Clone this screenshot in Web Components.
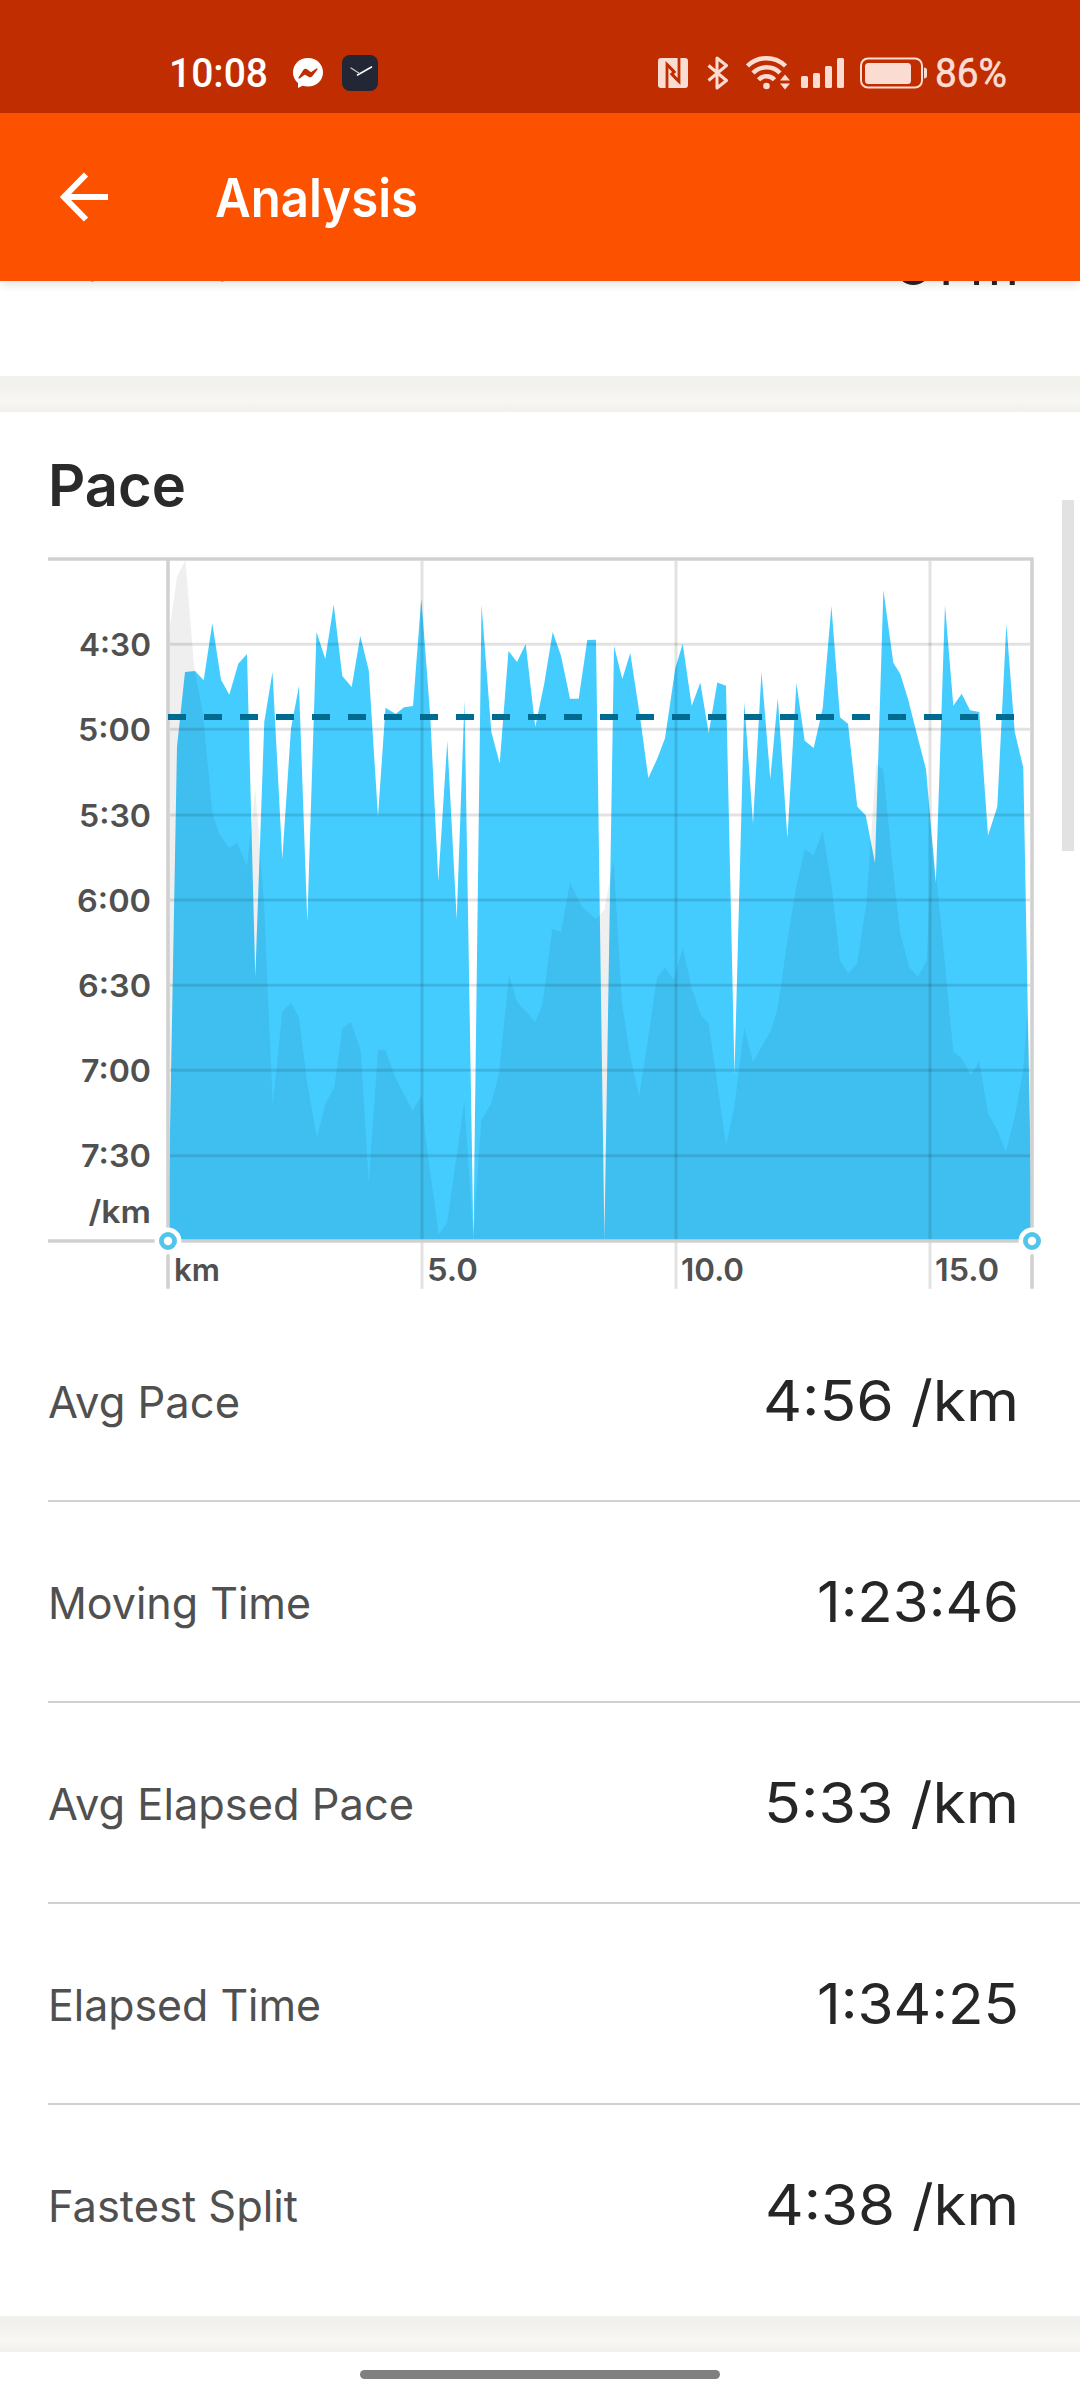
<!DOCTYPE html>
<html lang="en">
<head>
<meta charset="utf-8">
<title>Analysis</title>
<style>
  html, body { margin: 0; height: 100%; }
  body {
    background: #fff;
    font-family: Inter, 'Liberation Sans', sans-serif;
    color: #2a2a2a;
    overflow: hidden;
  }
</style>
</head>
<body>
<analysis-screen>
  <status-bar slot="top" time="10:08" battery="86%"></status-bar>
  <app-bar slot="top">Analysis</app-bar>

  <stat-section class="scrolled">
    <stat-row label="Max Elevation" value="81 m" label-width="255" value-width="123"></stat-row>
  </stat-section>
  <section-gap></section-gap>
  <stat-section heading="Pace">
    <pace-chart></pace-chart>
    <stat-row label="Avg Pace" value="4:56 /km" label-width="192" value-width="256"></stat-row>
    <stat-row label="Moving Time" value="1:23:46" label-width="263" value-width="202"></stat-row>
    <stat-row label="Avg Elapsed Pace" value="5:33 /km" label-width="366" value-width="255"></stat-row>
    <stat-row label="Elapsed Time" value="1:34:25" label-width="273" value-width="202"></stat-row>
    <stat-row label="Fastest Split" value="4:38 /km" label-width="250" value-width="254"></stat-row>
  </stat-section>
  <section-gap></section-gap>
  <nav-pill></nav-pill>
</analysis-screen>

<script>
const html = (markup) => {
  const template = document.createElement('template');
  template.innerHTML = markup;
  return template;
};

class BaseElement extends HTMLElement {
  constructor() {
    super();
    this.attachShadow({ mode: 'open' });
    this.shadowRoot.appendChild(this.constructor.template.content.cloneNode(true));
  }
}

/** Text stretched (or condensed) to a given advance width. */
class FitText extends BaseElement {
  static template = html(`
    <style>
      :host { display: block; white-space: nowrap; }
      span { display: inline-block; transform-origin: 0 50%; }
    </style>
    <span><slot></slot></span>
  `);

  fit() {
    const span = this.shadowRoot.querySelector('span');
    const width = Number(this.getAttribute('width'));
    if (!width || !this.textContent) return;
    span.style.transform = 'none';
    this.style.width = `${width}px`;
    span.style.transform = `scaleX(${width / span.getBoundingClientRect().width})`;
  }

  connectedCallback() {
    this.fit();
  }
}

class AnalysisScreen extends BaseElement {
  static template = html(`
    <style>
      :host {
        display: flex;
        flex-direction: column;
        width: 1080px;
        height: 2400px;
        position: relative;
        overflow: hidden;
        background: #fff;
      }
      header { position: relative; z-index: 1; flex: none; box-shadow: 0 3px 10px rgba(0,0,0,0.12); }
      main { flex: 1; min-height: 0; overflow: hidden; }
      .scrollbar {
        position: absolute;
        top: 500px;
        right: 6px;
        width: 12px;
        height: 351px;
        background: #e2e2e2;
      }
    </style>
    <header><slot name="top"></slot></header>
    <main><slot></slot></main>
    <div class="scrollbar"></div>
  `);
}

class StatusBar extends BaseElement {
  static template = html(`
    <style>
      :host {
        display: flex;
        align-items: center;
        box-sizing: border-box;
        height: 113px;
        padding: 33px 73px 0 169px;
        background: #c02d00;
        color: #fff;
        font-family: Roboto, sans-serif;
        font-weight: 500;
        font-size: 40px;
        line-height: 1;
      }
      svg { display: block; flex: none; }
      .time { margin-top: 2px; }
      .messenger { margin-left: 25px; }
      .clock { margin-left: 19px; }
      .system { display: flex; align-items: center; margin-left: auto; color: #fadcd3; }
      .bluetooth { margin-left: 19px; }
      .wifi { margin-left: 17px; }
      .signal { margin-left: 10px; }
      .power { margin-left: 16px; }
      .battery { margin: 2px 0 0 8px; font-weight: 400; -webkit-text-stroke: 0.6px; }
    </style>
    <fit-text class="time" width="99"></fit-text>
    <svg class="messenger" width="30" height="32" viewBox="0 0 30 32">
      <path fill="#fff" d="M15 1C6.600 1 0 7 0 15.500c0 4.500 2 8 5 10.500V31l4.500-2.200c1.700.5 3.500.8 5.500.8 8.400 0 15-6 15-14.300S23.400 1 15 1z"/>
      <path fill="#c02d00" d="M5.500 20.500 10.300 13c.9-1.300 2.600-1.600 3.800-.7l3.300 2.500c.4.300.8.300 1.200 0l4.800-3.200c.7-.5 1.500.3 1.100 1l-5.200 6.600c-.9 1.200-2.500 1.500-3.700.6L12.500 18c-.4-.3-.8-.3-1.200 0l-4.700 3.400c-.7.500-1.500-.2-1.100-.9z"/>
    </svg>
    <svg class="clock" width="36" height="36" viewBox="0 0 36 36">
      <rect width="36" height="36" rx="8" fill="#222635"/>
      <path fill="none" stroke="#fff" stroke-linecap="round" stroke-width="1.600" d="M15.500 20 29.500 12"/>
      <path fill="none" stroke="#c8c8cd" stroke-linecap="round" stroke-width="1.300" d="m9 13 8.500 5.500"/>
    </svg>
    <div class="system">
      <svg width="30" height="32" viewBox="0 0 30 32">
        <rect y="1" width="30" height="30" rx="3" fill="currentColor"/>
        <path fill="none" stroke="#c02d00" stroke-width="2.800" d="M9 31V7.500l6 6.200v5M21 1v23.500L15 18.200V13"/>
        <path fill="none" stroke="#c02d00" stroke-width="2.200" d="m9 7 8.500 8.800M21 25l-8.500-8.800"/>
      </svg>
      <svg class="bluetooth" width="22" height="34" viewBox="0 0 22 34">
        <path fill="none" stroke="currentColor" stroke-width="3" stroke-linejoin="round" d="m1.500 9.500 18 15L10 32V2l9.500 7.500-18 15"/>
      </svg>
      <svg class="wifi" width="45" height="36" viewBox="0 0 45 36">
        <g fill="none" stroke="currentColor" stroke-width="4.500">
          <path d="M1.500 11a27 27 0 0 1 38 0"/>
          <path d="M7 18a19 19 0 0 1 27 0"/>
          <path d="M12.500 24.800a11 11 0 0 1 16 0"/>
        </g>
        <circle cx="20.500" cy="31" r="3.300" fill="currentColor"/>
        <path fill="currentColor" d="m34 25.500 5-6 5 6zM34 28.500l5 6 5-6z"/>
      </svg>
      <svg class="signal" width="43" height="32" viewBox="0 0 43 32">
        <g fill="currentColor">
          <rect y="19" width="7" height="12" rx="1.500"/>
          <rect x="12" y="16" width="7" height="15" rx="1.500"/>
          <rect x="24" y="9" width="7" height="22" rx="1.500"/>
          <rect x="36" y="1" width="7" height="30" rx="1.500"/>
        </g>
      </svg>
      <svg class="power" width="67" height="32" viewBox="0 0 67 32">
        <rect x="1" y="1.500" width="61" height="29" rx="7" fill="none" stroke="currentColor" stroke-width="2"/>
        <rect x="5" y="6" width="46" height="21" rx="3.500" fill="currentColor"/>
        <path fill="currentColor" d="M64 10.500c2 0 3 1 3 2.500v6c0 1.500-1 2.500-3 2.500z"/>
      </svg>
      <fit-text class="battery" width="72"></fit-text>
    </div>
  `);

  connectedCallback() {
    for (const name of ['time', 'battery']) {
      const el = this.shadowRoot.querySelector(`.${name}`);
      el.textContent = this.getAttribute(name);
      el.fit?.();
    }
  }
}

class AppBar extends BaseElement {
  static template = html(`
    <style>
      :host {
        display: flex;
        align-items: center;
        height: 168px;
        padding-left: 60px;
        background: #fc5200;
        color: #fff;
      }
      h1 { margin: 2px 0 0 107px; font-size: 53px; font-weight: 600; line-height: 1; }
    </style>
    <svg width="48" height="50" viewBox="0 0 48 50">
      <path fill="none" stroke="#fff" stroke-width="6" d="M48 25H5M26 2.500 4 25l22 22.500"/>
    </svg>
    <h1><fit-text width="203"></fit-text></h1>
  `);

  connectedCallback() {
    const title = this.shadowRoot.querySelector('fit-text');
    title.textContent = this.textContent.trim();
    title.fit?.();
  }
}

class StatSection extends BaseElement {
  static template = html(`
    <style>
      :host { display: block; padding-bottom: 10px; background: #fff; }
      :host(.scrolled) { margin-top: -116px; padding-bottom: 11px; }
      h2 {
        display: flex;
        align-items: center;
        height: 128px;
        margin: 0;
        padding: 17px 0 0 48px;
        box-sizing: border-box;
        font-size: 58px;
        font-weight: 600;
        line-height: 1;
      }
      h2[hidden] { display: none; }
    </style>
    <h2 hidden><fit-text width="138"></fit-text></h2>
    <slot></slot>
  `);

  connectedCallback() {
    const heading = this.getAttribute('heading');
    if (!heading) return;
    this.shadowRoot.querySelector('h2').hidden = false;
    const text = this.shadowRoot.querySelector('fit-text');
    text.textContent = heading;
    text.fit?.();
  }
}

class StatRow extends BaseElement {
  static template = html(`
    <style>
      :host {
        display: flex;
        align-items: center;
        justify-content: space-between;
        box-sizing: border-box;
        height: 201px;
        margin-left: 48px;
        padding: 3px 61px 0 0;
        border-bottom: 2px solid #d0d0d0;
        line-height: 1.2;
      }
      :host(:last-of-type) { border-bottom-color: transparent; }
      :host(:only-of-type) { height: 200px; }
      .label { font-size: 43.5px; font-weight: 400; color: #505050; }
      .value { font-size: 56px; font-weight: 400; color: #262626; }
    </style>
    <fit-text class="label"></fit-text>
    <fit-text class="value"></fit-text>
  `);

  connectedCallback() {
    for (const name of ['label', 'value']) {
      const el = this.shadowRoot.querySelector(`.${name}`);
      el.setAttribute('width', this.getAttribute(`${name}-width`));
      el.textContent = this.getAttribute(name);
      el.fit?.();
    }
  }
}

class SectionGap extends BaseElement {
  static template = html(`
    <style>
      :host {
        display: block;
        height: 36px;
        background: linear-gradient(#f0f1ec, #f3f2ee 35%, #f8f7f4 68%, #f1f0ed);
      }
    </style>
  `);
}

class NavPill extends BaseElement {
  static template = html(`
    <style>
      :host { display: flex; justify-content: center; padding-top: 18px; }
      div { width: 360px; height: 9px; border-radius: 5px; background: #808080; }
    </style>
    <div></div>
  `);
}

/* Series are [x, y] pairs in plot pixels. */
const PACE = [
  [168,1240],[177,746.7],[185,672],[195,671],[203.7,680.3],[212.3,623.3],[221,679.7],[229.3,694.7],
  [238.3,663.7],[247,654],[255.3,977],[264.3,721.7],[272.5,672],[282.3,859],[291,728.3],[299,686],
  [307.3,922],[316.5,632],[325.3,659],[333.7,604.5],[342.3,676],[351.7,687],[360.3,636],[368.7,670],
  [378,816.500],[385.5,707.7],[395.7,714],[404,707.3],[413,706],[421.3,598.5],[430.3,716.7],
  [438.3,881],[447.3,741],[456.7,919.5],[464.5,700],[473.4,1239],[481.5,604.5],[491.3,731.7],
  [499.7,763.5],[508.5,651],[517,662],[525.7,644],[535.3,727],[544.3,683.3],[552.7,632],[561,655.7],
  [570,698.7],[578.7,698.7],[587.3,640],[596,639.7],[604.4,1239],[614,646],[622.3,679],[630.3,653],
  [640,716.7],[648.3,778],[657,759.3],[665,738.3],[675.3,668.3],[682.7,643.7],[691.7,706],[700.3,682.5],
  [708.7,733],[717.3,682.5],[726,685.7],[734.5,1074],[744.3,702],[753,823.5],[761.5,672],[770.3,779],
  [777.8,698],[787.4,838],[796.4,683],[804.7,740.7],[813.7,748],[822.7,708.3],[831.4,606],[840,717.3],
  [848,723.7],[857.3,806.7],[865.7,815.3],[875,863],[883.4,590],[893.3,662.7],[900.3,674],[908.3,700],
  [917.3,735.7],[926,769.3],[935.8,883],[945,605],[953.3,705.7],[961.7,693.7],[970,710.3],[979.3,712],
  [988,835.500],[997.3,806.7],[1006.4,624],[1014.7,731.7],[1023.3,767.7],[1032,1240]
];

const ELEVATION = [
  [168,640],[177,576.7],[185.4,560],[194.3,668.3],[203,713.3],[212.3,812.3],[219,833.3],[229.3,848],
  [237.3,842.7],[247,866],[255.3,788],[264,903],[272.8,1105],[282.3,1011.7],[291,1002.7],[299,1017.3],
  [307.3,1083.3],[317,1137.3],[325.7,1103.3],[334.3,1086.7],[342.3,1028.3],[351,1022],[361,1051.7],
  [368.7,1182],[378,1049.7],[385.3,1050],[395,1076.7],[412.7,1110.7],[421.3,1095],[426,1140],
  [438.7,1234],[447,1223.3],[464.3,1101.7],[473.3,1235],[481.3,1120],[491.3,1103.3],[499,1073.3],
  [509,975],[517,1001.7],[535.3,1021.7],[542.3,1005],[552.3,928.7],[561,932],[570,882],[581.7,906.7],
  [596,919],[604.3,910],[613.7,860],[622,1003.3],[630.3,1056.7],[639.3,1096],[648.3,1036.7],[657,977.3],
  [665,967.7],[674,979],[682.7,946.7],[691.7,988.3],[701,1015],[708.7,1023.3],[726,1145],[734.3,1106.7],
  [744.3,1027.7],[753,1061.7],[770.3,1031.7],[777.7,1008.3],[787.3,941],[796.3,886.7],[804.7,849.3],
  [813.7,855.3],[822.7,830.7],[831.3,883.3],[840,960.7],[848.3,973.3],[857.3,963.3],[866.7,900],
  [876,764],[883.3,769.3],[893.3,873.3],[900,931.7],[909,966.7],[917.7,976.7],[926.7,960.7],
  [932,835],[942.7,940],[953.3,1051.7],[961.7,1058.3],[970.7,1075],[979.3,1061],[988,1113.3],
  [997.3,1130],[1006,1151.7],[1014.3,1118.3],[1023.3,1070],[1027,1015],[1032,1100]
];

const Y_LABELS = [
  ['4:30', 644.3, 72], ['5:00', 729.3, 73], ['5:30', 815, 72], ['6:00', 900, 74],
  ['6:30', 985.3, 73], ['7:00', 1070.3, 70], ['7:30', 1155.7, 70]
];
const X_LABELS = [['5.0', 422, 51], ['10.0', 676, 63], ['15.0', 930, 64]];
const AXIS = { left: 168, right: 1032, top: 559, bottom: 1241 };

class PaceChart extends BaseElement {
  static template = html(`
    <style>
      :host { display: block; height: 761px; }
      svg { display: block; }
      text { font-family: inherit; font-size: 31px; font-weight: 600; fill: #505050; }
      .pace { fill: #44ccff; }
      .elevation { fill: #000; fill-opacity: 0.064; }
      .grid { stroke: #000; stroke-opacity: 0.115; stroke-width: 3; }
      .axis { stroke: #d0d0d0; stroke-width: 3.500; }
      .average { stroke: #006b91; stroke-width: 6; stroke-dasharray: 18; }
      .halo { fill: #fff; }
      .handle { fill: #fff; stroke: #54c5ea; stroke-width: 4.800; }
    </style>
    <svg width="1080" height="761" viewBox="0 540 1080 761"></svg>
  `);

  connectedCallback() {
    const { left, right, top, bottom } = AXIS;
    const area = (points) => `M${left} ${bottom} L${points.map((p) => p.join(' ')).join(' L')} L${right} ${bottom}Z`;
    const line = (cls, x1, y1, x2, y2) => `<line class="${cls}" x1="${x1}" y1="${y1}" x2="${x2}" y2="${y2}"/>`;
    const text = (label, x, y, width) => `<text x="${x}" y="${y}" textLength="${width}" lengthAdjust="spacingAndGlyphs">${label}</text>`;
    const handle = (x) => `<circle class="halo" cx="${x}" cy="${bottom}" r="13.500"/><circle class="handle" cx="${x}" cy="${bottom}" r="6.600"/>`;

    this.shadowRoot.querySelector('svg').innerHTML = [
      `<path class="pace" d="${area(PACE)}"/>`,
      `<path class="elevation" d="${area(ELEVATION)}"/>`,
      ...Y_LABELS.map(([, y]) => line('grid', left + 2, y, right - 2, y)),
      ...X_LABELS.map(([, x]) => line('grid', x, top + 2, x, 1288.7)),
      line('axis', 48, top, right + 1.5, top),
      line('axis', 48, bottom, right, bottom),
      line('axis', left, top, left, 1288.7),
      line('axis', right, top, right, 1288.7),
      line('average', left, 717, right - 1, 717),
      ...Y_LABELS.map(([label, y, width]) => text(label, 151 - width, y + 11.5, width)),
      text('/km', 88.5, 1222.5, 62.5),
      text('km', 174, 1280.7, 46),
      ...X_LABELS.map(([label, x, width]) => text(label, x + 5, 1280.7, width)),
      handle(left),
      handle(right)
    ].join('');
  }
}

customElements.define('fit-text', FitText);
customElements.define('stat-section', StatSection);
customElements.define('stat-row', StatRow);
customElements.define('section-gap', SectionGap);
customElements.define('pace-chart', PaceChart);
customElements.define('status-bar', StatusBar);
customElements.define('app-bar', AppBar);
customElements.define('nav-pill', NavPill);
customElements.define('analysis-screen', AnalysisScreen);
</script>
</body>
</html>
